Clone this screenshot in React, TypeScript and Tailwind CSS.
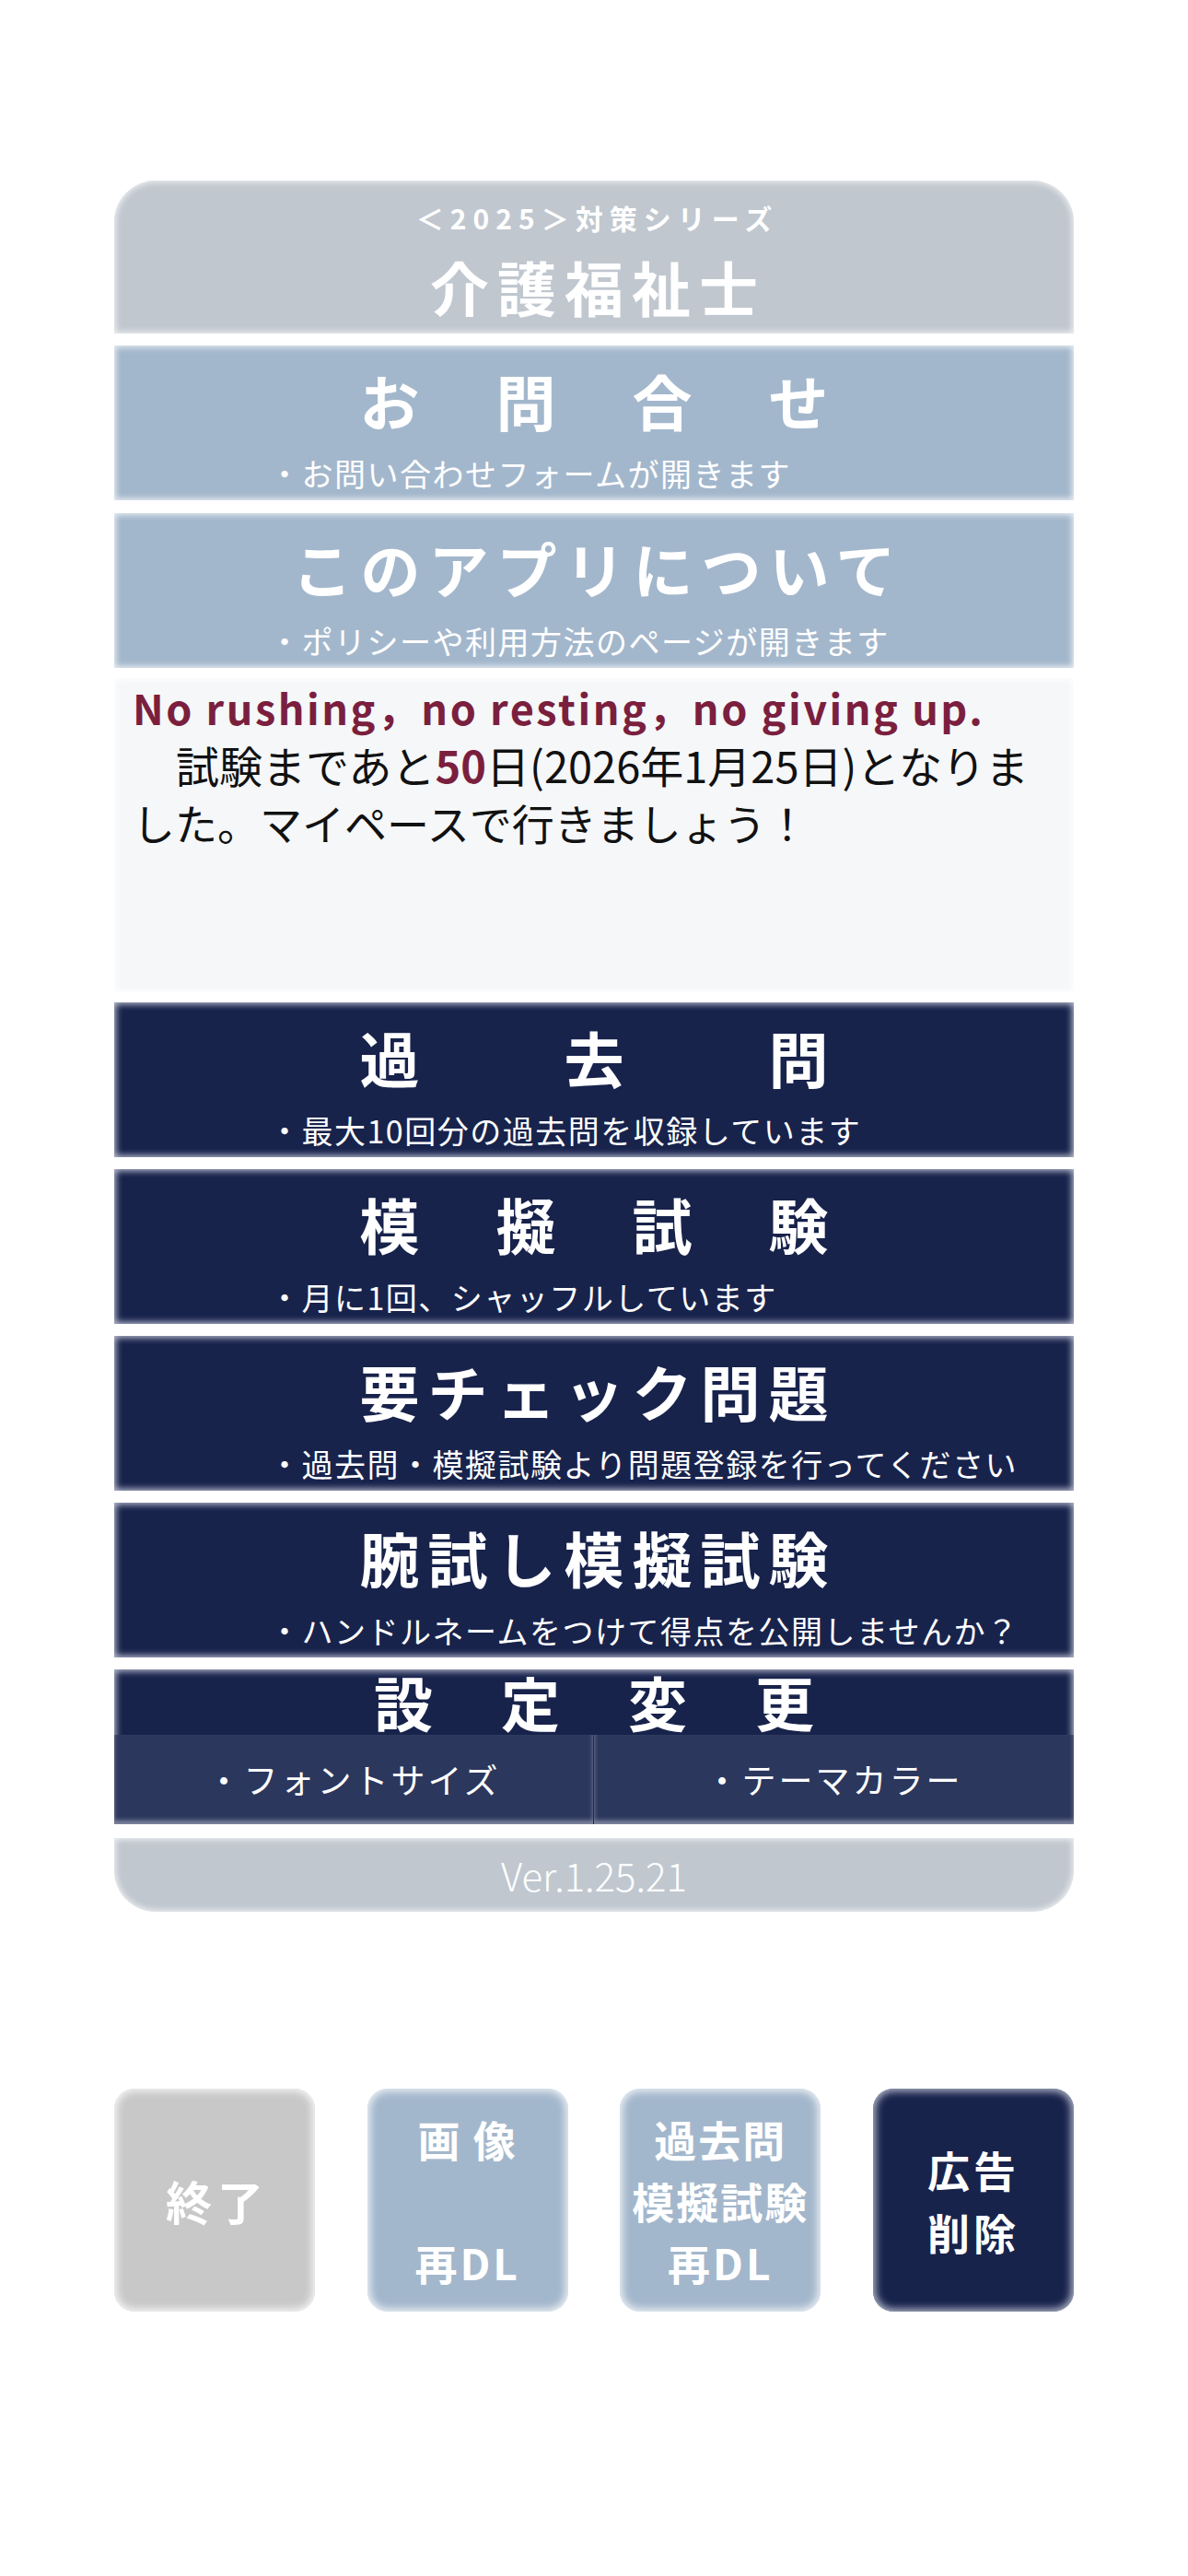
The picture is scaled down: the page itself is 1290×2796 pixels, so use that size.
import React from "react";

const F = "font-['Noto_Sans_CJK_JP','Noto_Sans',sans-serif]";

function MenuBox({
  title,
  sub,
  light,
}: {
  title: string;
  sub: string;
  light?: boolean;
}) {
  return (
    <div
      className={
        light
          ? "h-[168px] bg-[#a3b7cc] shadow-[inset_0_0_6px_2px_rgba(255,255,255,0.75)] flex flex-col"
          : "h-[168px] bg-[#18234c] shadow-[inset_0_0_7px_2px_rgba(215,219,230,0.85)] flex flex-col"
      }
    >
      <div className="pt-[27px] text-center text-white font-bold text-[65px] leading-none tracking-[9px] pl-[9px]">
        {title}
      </div>
      <div className="mt-[30px] pl-[168px] text-white text-[34px] leading-none tracking-[1.5px] whitespace-nowrap">
        {sub}
      </div>
    </div>
  );
}

export default function App() {
  return (
    <div className={`${F} bg-white min-h-[2796px] w-[1290px]`}>
      <div className="pt-[196px] px-[124px] flex flex-col">
        {/* Header */}
        <div className="h-[166px] rounded-t-[45px] bg-[#c0c7cf] shadow-[inset_0_0_6px_2px_rgba(255,255,255,0.7)] flex flex-col items-center text-white font-bold">
          <div className="pt-[25px] text-[30px] leading-none tracking-[7px] pl-[7px]">
            ＜2025＞対策シリーズ
          </div>
          <div className="mt-[27px] text-[64px] leading-none tracking-[9px] pl-[9px]">
            介護福祉士
          </div>
        </div>

        <div className="mt-[13px]">
          <MenuBox light title="お　問　合　せ" sub="・お問い合わせフォームが開きます" />
        </div>
        <div className="mt-[14px]">
          <MenuBox light title="このアプリについて" sub="・ポリシーや利用方法のページが開きます" />
        </div>

        {/* Message */}
        <div className="mt-[11px] h-[341px] bg-[#f5f7f9] shadow-[inset_0_0_6px_2px_rgba(255,255,255,0.9)] px-[20px] pt-[1px]">
          <div className="text-[#7b1f3e] font-bold text-[45px] leading-[62px] tracking-[2.5px] whitespace-nowrap">
            No rushing，no resting，no giving up.
          </div>
          <div className="text-[#111111] text-[47px] leading-[62px] whitespace-nowrap">
            {"\u3000試験まであと"}
            <span className="text-[#7b1f3e] font-bold">50</span>
            {"日(2026年1月25日)となりま"}
          </div>
          <div className="text-[#111111] text-[46px] leading-[62px] whitespace-nowrap">
            した。マイペースで行きましょう！
          </div>
        </div>

        <div className="mt-[11px]">
          <MenuBox title="過　　去　　問" sub="・最大10回分の過去問を収録しています" />
        </div>
        <div className="mt-[13px]">
          <MenuBox title="模　擬　試　験" sub="・月に1回、シャッフルしています" />
        </div>
        <div className="mt-[13px]">
          <MenuBox title="要チェック問題" sub="・過去問・模擬試験より問題登録を行ってください" />
        </div>
        <div className="mt-[13px]">
          <MenuBox title="腕試し模擬試験" sub="・ハンドルネームをつけて得点を公開しませんか？" />
        </div>

        {/* Settings */}
        <div className="mt-[13px] h-[168px] bg-[#18234c] shadow-[inset_0_0_7px_2px_rgba(215,219,230,0.85)] flex flex-col">
          <div className="pt-[2px] text-center text-white font-bold text-[64px] leading-none tracking-[5px] pl-[5px] h-[71px]">
            設　定　変　更
          </div>
          <div className="grid grid-cols-2 flex-1">
            <div className="bg-[#2c375d] border-r border-[#222b50] flex items-center justify-center text-white text-[37px] leading-none tracking-[3px] shadow-[inset_0_-4px_5px_rgba(215,219,230,0.5)]">
              ・フォントサイズ
            </div>
            <div className="bg-[#2c375d] flex items-center justify-center text-white text-[37px] leading-none tracking-[3px] shadow-[inset_0_-4px_5px_rgba(215,219,230,0.5)]">
              ・テーマカラー
            </div>
          </div>
        </div>

        {/* Version */}
        <div className="mt-[15px] h-[80px] rounded-b-[45px] bg-[#c0c7cf] shadow-[inset_0_0_6px_2px_rgba(255,255,255,0.7)] flex items-center justify-center text-white font-light text-[42px] leading-none">
          Ver.1.25.21
        </div>

        {/* Bottom buttons */}
        <div className="mt-[192px] flex justify-between">
          <div className="w-[218px] h-[242px] rounded-[22px] bg-[#c8c8c8] shadow-[inset_0_0_8px_3px_rgba(255,255,255,0.8)] flex items-center justify-center text-white font-bold text-[50px] leading-none tracking-[6px] pl-[6px]">
            終了
          </div>
          <div className="w-[218px] h-[242px] rounded-[22px] bg-[#a3b7cc] shadow-[inset_0_0_8px_3px_rgba(255,255,255,0.8)] flex flex-col items-center justify-center text-white font-bold text-[46px] leading-[67px]">
            <div className="tracking-[2px]">画 像</div>
            <div>&nbsp;</div>
            <div className="tracking-[3px]">再DL</div>
          </div>
          <div className="w-[218px] h-[242px] rounded-[22px] bg-[#a3b7cc] shadow-[inset_0_0_8px_3px_rgba(255,255,255,0.8)] flex flex-col items-center justify-center text-white font-bold text-[46px] leading-[67px]">
            <div className="tracking-[2px]">過去問</div>
            <div className="tracking-[2px]">模擬試験</div>
            <div className="tracking-[3px]">再DL</div>
          </div>
          <div className="w-[218px] h-[242px] rounded-[22px] bg-[#18234c] shadow-[inset_0_0_8px_3px_rgba(215,219,230,0.8)] flex flex-col items-center justify-center text-white font-bold text-[46px] leading-[68px]">
            <div className="tracking-[4px]">広告</div>
            <div className="tracking-[4px]">削除</div>
          </div>
        </div>
      </div>
    </div>
  );
}
